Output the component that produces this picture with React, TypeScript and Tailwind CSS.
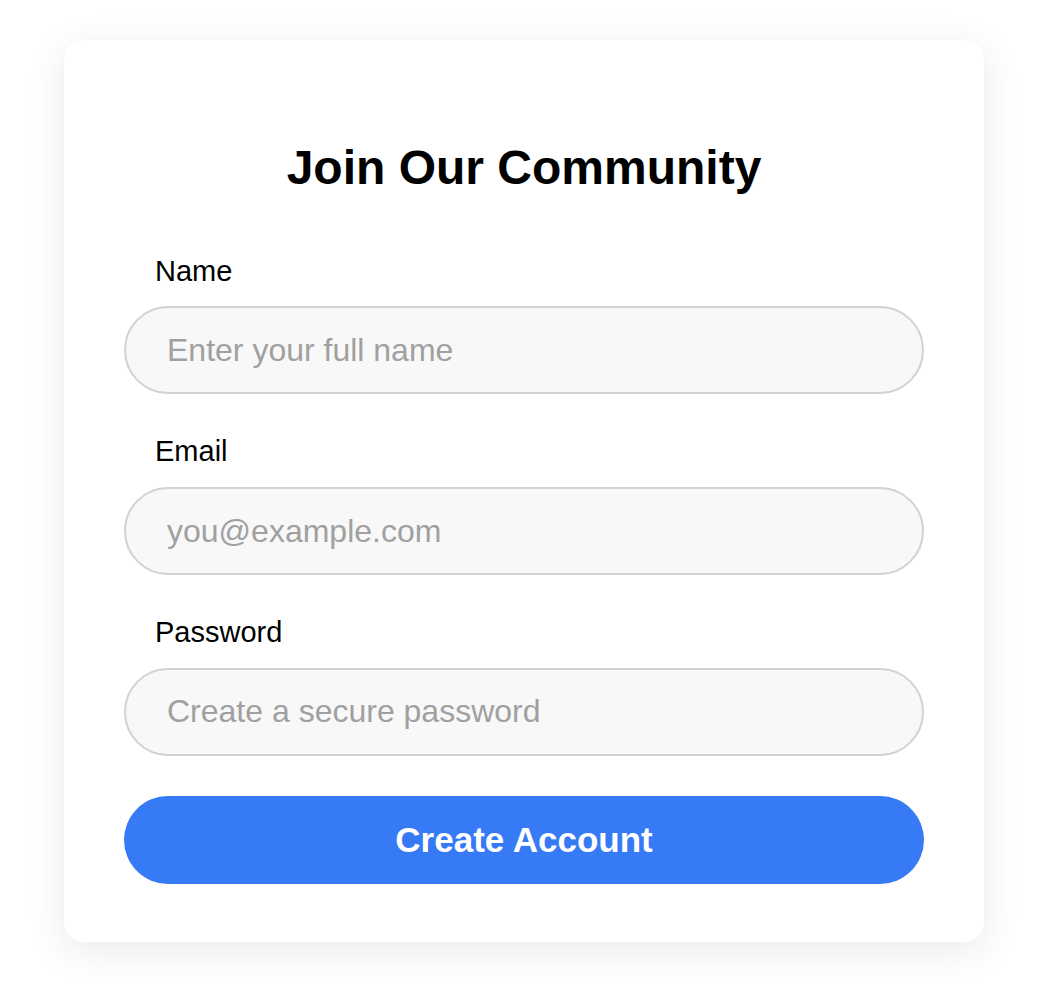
import { useState } from "react";

const fields = [
  { id: "name", label: "Name", type: "text", placeholder: "Enter your full name" },
  { id: "email", label: "Email", type: "email", placeholder: "you@example.com" },
  { id: "password", label: "Password", type: "password", placeholder: "Create a secure password" },
];

export default function App() {
  const [values, setValues] = useState<Record<string, string>>({});

  return (
    <div
      className="min-h-screen bg-white pl-[64px] pt-[40px] pb-[50px]"
      style={{ fontFamily: '"Liberation Sans", Arial, Helvetica, sans-serif' }}
    >
      <div className="w-[920px] rounded-[20px] bg-white px-[60px] pt-[99px] pb-[58px] shadow-[0_8px_40px_rgba(0,0,0,0.09)]">
        {/* ─── Title ─── */}
        <h1 className="text-center text-[48px] font-bold leading-[1.2] text-black">
          Join Our Community
        </h1>

        {/* ─── Fields ─── */}
        <form
          className="mt-[57px] flex flex-col gap-[40px]"
          onSubmit={(e) => e.preventDefault()}
        >
          {fields.map((f) => (
            <div key={f.id} className="flex flex-col gap-[18px]">
              <label
                htmlFor={f.id}
                className="pl-[31px] text-[29px] leading-[1.2] text-black"
              >
                {f.label}
              </label>
              <input
                id={f.id}
                type={f.type}
                placeholder={f.placeholder}
                value={values[f.id] ?? ""}
                onChange={(e) => setValues({ ...values, [f.id]: e.target.value })}
                className="h-[88px] w-full rounded-full border-2 border-[#d2d2d2] bg-[#f8f8f8] px-[41px] text-[32px] text-black outline-none placeholder:text-[#a0a0a0]"
              />
            </div>
          ))}

          <button
            type="submit"
            className="h-[88px] w-full cursor-pointer rounded-full bg-[#377af5] text-[35px] font-bold text-white"
          >
            Create Account
          </button>
        </form>
      </div>
    </div>
  );
}
